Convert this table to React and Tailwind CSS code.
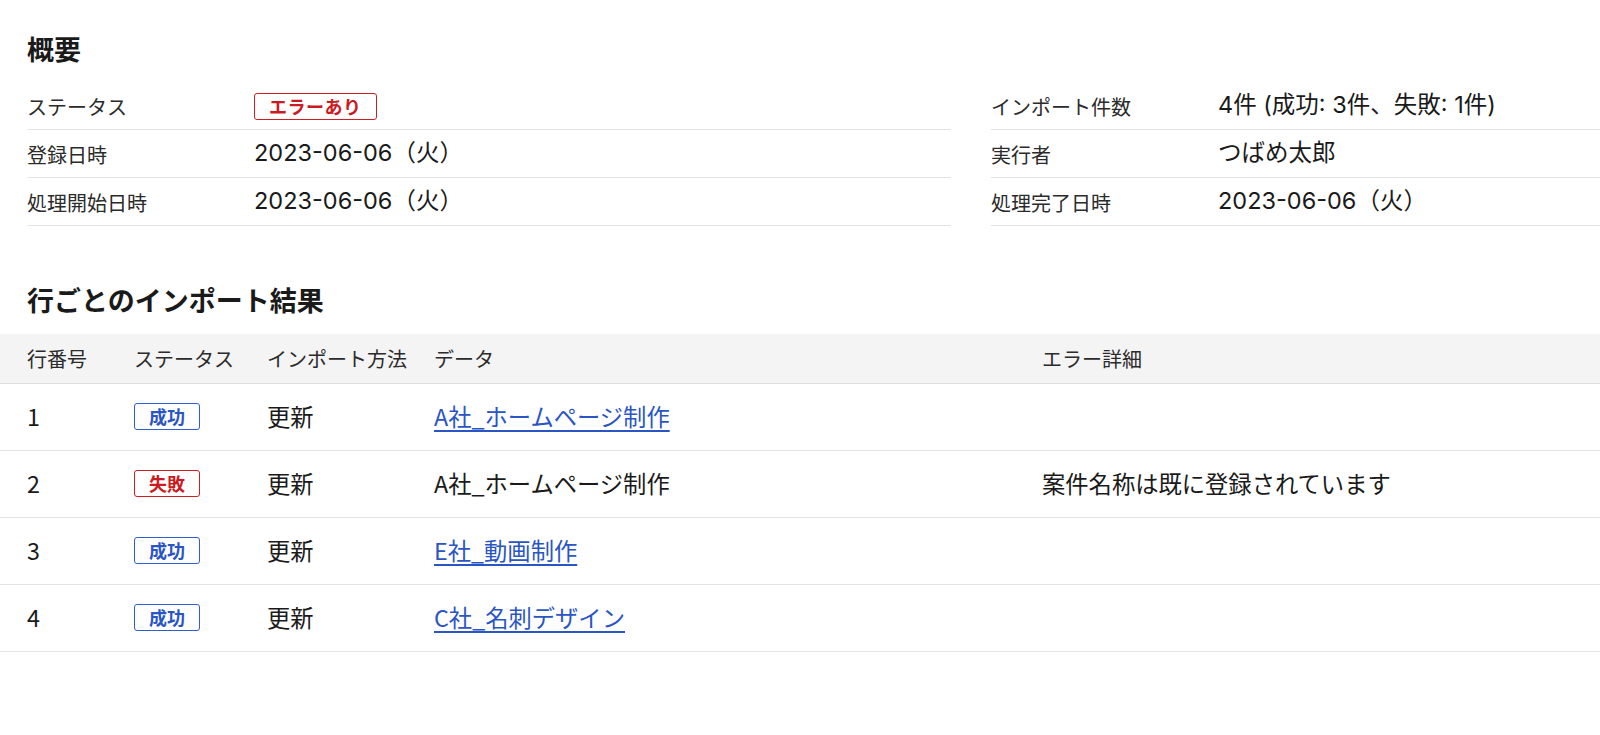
const overviewLeft = [
    { label: 'ステータス', badge: 'エラーあり' },
    { label: '登録日時', value: '2023-06-06（火）' },
    { label: '処理開始日時', value: '2023-06-06（火）' },
]

const overviewRight = [
    { label: 'インポート件数', value: '4件 (成功: 3件、失敗: 1件)' },
    { label: '実行者', value: 'つばめ太郎' },
    { label: '処理完了日時', value: '2023-06-06（火）' },
]

const rows = [
    { no: 1, ok: true, method: '更新', data: 'A社_ホームページ制作', error: '' },
    { no: 2, ok: false, method: '更新', data: 'A社_ホームページ制作', error: '案件名称は既に登録されています' },
    { no: 3, ok: true, method: '更新', data: 'E社_動画制作', error: '' },
    { no: 4, ok: true, method: '更新', data: 'C社_名刺デザイン', error: '' },
]

function StatusBadge({ ok }) {
    return (
        <span
            className={
                ok
                    ? 'inline-flex h-[27px] items-center rounded-[3px] border border-[#2d5fd3] px-[14px] text-[18px] font-bold text-[#2a55c4]'
                    : 'inline-flex h-[27px] items-center rounded-[3px] border border-[#cf1d24] px-[14px] text-[18px] font-bold text-[#cc1a22]'
            }
        >
            {ok ? '成功' : '失敗'}
        </span>
    )
}

function OverviewRow({ item }) {
    return (
        <div className="flex h-[48px] items-center border-b border-[#e4e4e4] pt-[2px]">
            <div className="w-[227px] shrink-0 text-[20px] text-[#2b2b2b]">{item.label}</div>
            {item.badge ? (
                <span className="inline-flex h-[27px] items-center rounded-[3px] border border-[#cf1d24] px-[14px] text-[18px] font-bold tracking-[0.5px] text-[#cc1a22]">
                    {item.badge}
                </span>
            ) : (
                <div
                    className="-mt-[3px] text-[23.5px] text-[#1a1a1a]"
                    style={{ fontFamily: 'Inter, "Noto Sans CJK JP", sans-serif' }}
                >
                    {item.value}
                </div>
            )}
        </div>
    )
}

export default function App() {
    return (
        <div
            className="min-h-screen bg-white pt-[31px] text-[#1a1a1a]"
            style={{ fontFamily: '"Noto Sans CJK JP", "Noto Sans", sans-serif' }}
        >
            <section>
                <h2 className="px-[27px] text-[27px] font-bold leading-[36px]">概要</h2>
                <div className="mt-[15px] flex gap-[40px] pl-[27px]">
                    <div className="w-[924px] shrink-0">
                        {overviewLeft.map((item) => (
                            <OverviewRow key={item.label} item={item} />
                        ))}
                    </div>
                    <div className="flex-1">
                        {overviewRight.map((item) => (
                            <OverviewRow key={item.label} item={item} />
                        ))}
                    </div>
                </div>
            </section>

            <section className="mt-[56px]">
                <h2 className="px-[27px] text-[27px] font-bold leading-[36px]">行ごとのインポート結果</h2>
                <div className="mt-[16px]">
                    <div className="grid h-[50px] grid-cols-[107px_133px_167px_608px_1fr] items-center border-b border-[#dedede] bg-[#f5f4f5] pl-[27px] text-[20px] text-[#2b2b2b]">
                        <div>行番号</div>
                        <div>ステータス</div>
                        <div>インポート方法</div>
                        <div>データ</div>
                        <div>エラー詳細</div>
                    </div>
                    {rows.map((row) => (
                        <div
                            key={row.no}
                            className="grid h-[67px] grid-cols-[107px_133px_167px_608px_1fr] items-center border-b border-[#e4e4e4] pb-[2px] pl-[27px] text-[23.3px]"
                        >
                            <div>{row.no}</div>
                            <div className="flex">
                                <StatusBadge ok={row.ok} />
                            </div>
                            <div>{row.method}</div>
                            <div>
                                {row.ok ? (
                                    <a href="#" className="text-[#2a55c4] underline underline-offset-[4px]">
                                        {row.data}
                                    </a>
                                ) : (
                                    <span>{row.data}</span>
                                )}
                            </div>
                            <div>{row.error}</div>
                        </div>
                    ))}
                </div>
            </section>
        </div>
    )
}
